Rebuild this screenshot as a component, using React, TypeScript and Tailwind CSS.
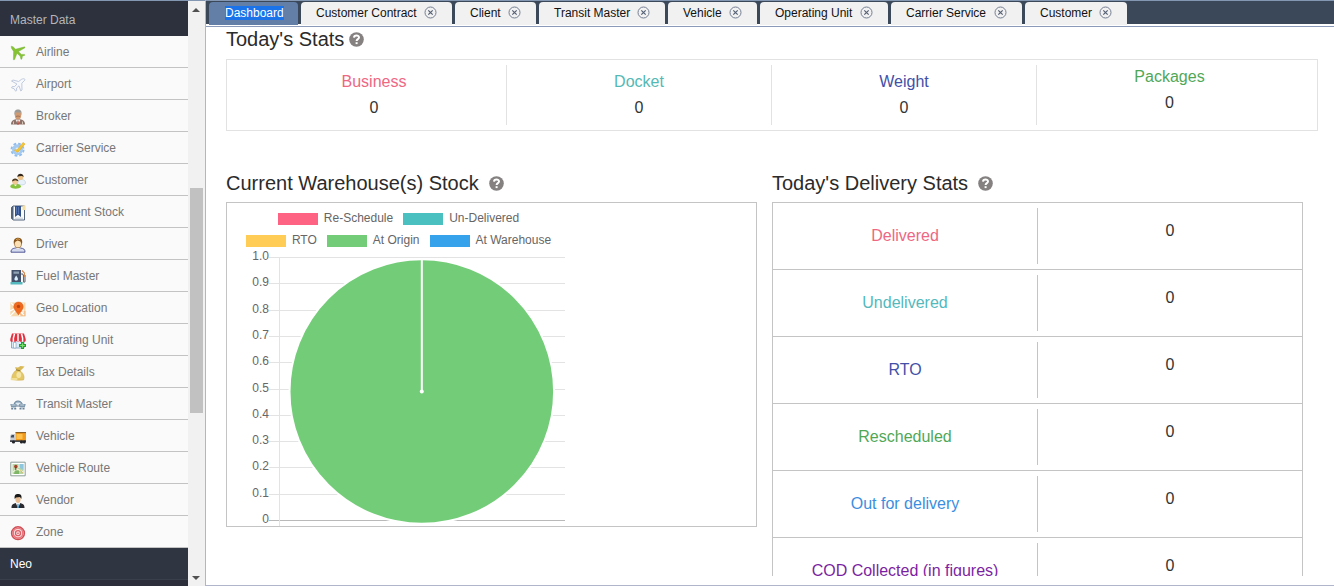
import React from "react";

type IconProps = { children: React.ReactNode };

function Glyph({ children }: IconProps) {
  return (
    <svg width="16" height="16" viewBox="0 0 16 16" fill="none" className="shrink-0">
      {children}
    </svg>
  );
}

const menu: { label: string; icon: React.ReactNode }[] = [
  {
    label: "Airline",
    icon: (
      <path
        fill="#86c332"
        stroke="#6bab2a"
        strokeWidth=".4"
        strokeLinejoin="round"
        d="M1.200 1.200 3 1.700 5.600 4.200 14.600 1.800 15 2.700 8.400 6.600 11.400 9.400 14.500 9.400 14.600 10.400 12.400 11 12 13.800 11 14.400 10.200 11.300 7 8.200 4.600 14.600 3.400 14.800 3.600 6.400 1.500 3.200Z"
      />
    ),
  },
  {
    label: "Airport",
    icon: (
      <path
        fill="#f8f9fc"
        stroke="#b9c4da"
        strokeWidth=".9"
        strokeLinejoin="round"
        d="M1.500 4 3 3 8.600 4.500 11.600 2.300C13.500 1.300 15.400 1.700 14.800 3.200L11.800 6.200 12 13 10.800 14 9 8.800 6.600 11 6.600 13.600 5.600 14.200 4.200 11.800 1.500 10.800 2.100 9.700 4.700 9.500 6.900 7Z"
      />
    ),
  },
  {
    label: "Broker",
    icon: (
      <>
        <path d="M1 15.500C1 12 3 11 6 10h4c3 1 5 2 5 5.500Z" fill="#8d726a" />
        <path d="m5.500 10.500 2.500 5 2.500-5Z" fill="#f5f2f0" />
        <path d="M7.500 11.500h1l.5 4H7Z" fill="#b84c3d" />
        <path d="M3.500 12.500v3M12.500 12.500v3" stroke="#d6c4b8" />
        <ellipse cx="8" cy="6" rx="3.200" ry="4.500" fill="#cf9a72" />
        <path d="M4.600 6.500C3.800 2 5.500.6 8 .6S12.200 2 11.400 6.500L10.600 3.600H5.400Z" fill="#9c9a96" />
        <path d="M6 7.500q2-1 4 0" stroke="#9a6a4b" strokeWidth=".8" />
      </>
    ),
  },
  {
    label: "Carrier Service",
    icon: (
      <>
        <circle cx="7.500" cy="8.700" r="6" stroke="#8fbcec" strokeWidth="2" strokeDasharray="2.700 2" />
        <circle cx="7.500" cy="8.700" r="5.500" fill="#a5caf1" />
        <circle cx="7.500" cy="9" r="2.600" fill="#dcecfb" />
        <path d="m5.600 8 1.400 1.200L13 1.400l2 1.600-7 8.200-2-.4-1.500-1.800Z" fill="#f5c62e" stroke="#dba021" strokeWidth=".5" />
      </>
    ),
  },
  {
    label: "Customer",
    icon: (
      <>
        <path d="M7.500 10.500c0-3 1.600-4 4-4s4 1 4 3.500-8 2.500-8 .5Z" fill="#e8f1f8" stroke="#b5c9d9" strokeWidth=".6" />
        <circle cx="10.500" cy="4.300" r="2.800" fill="#efc48a" />
        <path d="M7.300 4C7.500-.2 13.300-.4 13.700 4L12 3 9 3.200Z" fill="#33261a" />
        <path d="M.3 14C.5 11 2.500 11 5.500 11s5.500.4 5.500 3c-2 2.200-9 2.200-10.700 0Z" fill="#86c23c" />
        <circle cx="5.200" cy="8.700" r="3" fill="#f2c992" />
        <path d="M2 8.600C2 4.400 8 4.400 8.500 8.300L5.200 7.200Z" fill="#49371f" />
        <path d="m4 11.800 1.400 1.400L7 11.800Z" fill="#fff" />
      </>
    ),
  },
  {
    label: "Document Stock",
    icon: (
      <>
        <path d="M1.500 2.500 3 1h11.500v14h-11L1.500 13.500Z" fill="#f9fbfd" stroke="#52637c" />
        <path d="M1.500 2 3.500 1v14l-2-1.500Z" fill="#52637c" />
        <path d="M5 1h6v11L8 9.800 5 12Z" fill="#314f89" />
        <path d="M6.500 2v7M8.500 2v7" stroke="#5c7dba" strokeWidth=".8" />
        <path d="M12.500.500h3v4.500h-3Z" fill="#f3dfa4" />
        <path d="M5 13.200h8" stroke="#c3ccd5" />
      </>
    ),
  },
  {
    label: "Driver",
    icon: (
      <>
        <path d="M1 15.200C1 11.800 3 11.500 5.500 11h5c3 .5 4.500 1 4.500 4.200Z" fill="#d5dbef" stroke="#41478c" strokeWidth=".9" />
        <path d="m5.500 11 2.500 2 2.500-2" fill="#fff" stroke="#9fa6cc" strokeWidth=".4" />
        <ellipse cx="8" cy="6.500" rx="3.500" ry="4.300" fill="#fae0b4" stroke="#8e6126" strokeWidth=".7" />
        <path d="M4 7.500C2.800 1.500 6 .6 8.400.7c4 .2 4.400 4 3.400 6.800L10.500 4.600 7.500 3.600 5 5Z" fill="#86551f" />
        <path d="M6 2.600Q8 1.200 10 2.500" stroke="#d9a14f" />
      </>
    ),
  },
  {
    label: "Fuel Master",
    icon: (
      <>
        <path d="M1.500 1h9.500v13H1.500Z" fill="#43526a" />
        <path d="M3.500 2.500H9v2.300H3.500Z" fill="#8fa2b4" />
        <path d="M6.200 6.500C3.700 9.800 4 11.500 6.200 11.500s2.500-1.700 0-5Z" fill="#d9f0ff" />
        <path d="M11 5h1.500l1 1.500v6q.5 1.500 1.500 0V6" stroke="#636b76" strokeWidth="1.100" />
        <path d="M12 1.500 14.500 4V8" stroke="#d58a51" strokeWidth="1.100" />
        <path d="M.5 13h12v2.500H.5Z" fill="#54b9bf" />
      </>
    ),
  },
  {
    label: "Geo Location",
    icon: (
      <>
        <path d="M.3 1.500h15.200v13.800H.3Z" fill="#f7d9ae" />
        <path d="M10 10h5.500v5.300H9Z" fill="#f3c08e" />
        <path d="M0 10 6 7l4 8M1 2l13 12M0 15l6-6M13 2v10" stroke="#fff" strokeWidth="1.200" />
        <path d="M8.500 14C5 9 3.700 7.500 3.700 5.700a4.800 4.800 0 0 1 9.600 0C13.300 7.800 12 9 8.500 14Z" fill="#ef6a1f" stroke="#d2541a" strokeWidth=".4" />
        <circle cx="8.500" cy="5.400" r="1.700" fill="#b9420f" />
      </>
    ),
  },
  {
    label: "Operating Unit",
    icon: (
      <>
        <path d="M1.500 7h12.500v8H1.500Z" fill="#d7eaf8" stroke="#7d9bb6" strokeWidth=".8" />
        <path d="M3.500 9.500H6V15H3.500Z" fill="#fff" stroke="#7d9bb6" strokeWidth=".6" />
        <path d="M2 .5h12l1.700 5.500v2q-1.600 1.700-3.100 0-1.600 1.700-3.100 0-1.500 1.700-3.100 0-1.500 1.700-3.100 0Q1.800 9.700.3 8V6Z" fill="#e2303f" />
        <path d="M4.500.8 3.400 5v3.500M8 .8v7.700M11.500.8 12.600 5v3.500" stroke="#fff" strokeWidth="1.500" />
        <path d="M11 9h3v2h2v3h-2v2h-3v-2H9v-3h2Z" fill="#1fa12d" />
        <path d="M12.500 10.200v4.600M10.200 12.500h4.600" stroke="#7fdc70" strokeWidth="1.200" />
      </>
    ),
  },
  {
    label: "Tax Details",
    icon: (
      <>
        <path d="M6.500 5C3.500 7 1 11 2 14.500q4.500 1.200 11.500.5c1.500-3.500-.3-7-3.500-9.300Z" fill="#e5c866" stroke="#c8a64a" strokeWidth=".5" />
        <path d="M6 4.500 5 2.200l3 .3L10.500 1l4 .4-2 2.400-2.300 2Z" fill="#d8b955" />
        <path d="M6 4.800 10.300 5.800" stroke="#907530" />
        <ellipse cx="8.800" cy="10" rx="2.400" ry="3" fill="#f5e5a5" />
        <path d="M.8 13h6.500v2.200H.8Z" fill="#f1df95" />
      </>
    ),
  },
  {
    label: "Transit Master",
    icon: (
      <>
        <path d="M4 7.500Q5 4 8 4t4.500 3.500" fill="#a9bccd" stroke="#6c869e" strokeWidth="1.100" />
        <path d="M6 6h4v2H6Z" fill="#dde7ef" />
        <path d="M.3 7h6.400l-.7 3.500H1.200ZM9 7h6.700l-.9 3.500h-5Z" fill="#7f98ae" />
        <path d="M1.500 8h4M10.200 8h4" stroke="#c5d3de" />
        <path d="M6 9h4" stroke="#5d768d" />
        <path d="M1.200 11h2v1.500h-2ZM4.200 11h2v1.500h-2ZM9.500 11h2v1.500h-2ZM12.500 11h2v1.500h-2Z" fill="#6a8298" />
      </>
    ),
  },
  {
    label: "Vehicle",
    icon: (
      <>
        <path d="M5.500 3.300H16V12H5.500Z" fill="#f19a1c" />
        <path d="M6.500 5h6v5h-6Z" fill="#ffc14d" />
        <path d="M5.500 3.600H16" stroke="#5d3c10" strokeWidth=".8" />
        <path d="M.3 6.500 1.500 5h4v7H.3Z" fill="#c6cad0" />
        <path d="M.8 7.500 1.800 6H4v2.500H.8Z" fill="#3f4d5f" />
        <path d="M0 11.300h16v1.600H0Z" fill="#30343c" />
        <circle cx="3.500" cy="13" r="1.600" fill="#222429" />
        <circle cx="11.500" cy="13" r="1.600" fill="#222429" />
        <circle cx="14.300" cy="13" r="1.500" fill="#222429" />
      </>
    ),
  },
  {
    label: "Vehicle Route",
    icon: (
      <>
        <path d="M.8 1.200h14.400v13.600H.8Z" fill="#fff" stroke="#8c9f96" />
        <path d="M2.500 3h11v10h-11Z" fill="#b9d6a4" />
        <path d="M8 3h5.500v6L10 7Z" fill="#8fc6df" />
        <path d="m3 11 4-3 6 3M9 3v4" stroke="#eff5d7" strokeWidth="1.200" />
        <path d="M5 9.500h4V13H4Z" fill="#7fb566" />
        <circle cx="5.800" cy="5.500" r="1.700" fill="#a5442d" />
        <path d="M5.800 6v3" stroke="#7a3424" />
        <path d="m10.500 9.500 2 2.500" stroke="#ddb04b" />
      </>
    ),
  },
  {
    label: "Vendor",
    icon: (
      <>
        <path d="M1.500 15C1.500 11 3 11 6 10h4c3 1 4.500 1 4.500 5Z" fill="#2a2b30" />
        <path d="m5.700 10 2.300 5 2.300-5Z" fill="#eef5fb" />
        <path d="M7.500 11h1l.4 4H7Z" fill="#489bc7" />
        <ellipse cx="8" cy="6" rx="2.600" ry="4" fill="#e9bd93" />
        <path d="M4.700 6C4.200 2 5.500 1 8 1s4.200 1 3.300 5L10 4 6 4.400Z" fill="#19191a" />
      </>
    ),
  },
  {
    label: "Zone",
    icon: (
      <>
        <circle cx="8" cy="8.200" r="6.400" fill="#f9dfe0" stroke="#cf4f57" strokeWidth="1.500" />
        <circle cx="8" cy="8.200" r="4.900" stroke="#e8767c" strokeWidth="1.600" />
        <circle cx="8" cy="8.200" r="2.500" stroke="#dd6067" strokeWidth="1.300" />
        <circle cx="8" cy="8.200" r=".8" fill="#d2505a" />
      </>
    ),
  },
];

const tabs = [
  { label: "Customer Contract", width: "w-[151px]" },
  { label: "Client", width: "w-[81px]" },
  { label: "Transit Master", width: "w-[126px]" },
  { label: "Vehicle", width: "w-[89px]" },
  { label: "Operating Unit", width: "w-[128px]" },
  { label: "Carrier Service", width: "w-[131px]" },
  { label: "Customer", width: "w-[102px]" },
];

const stats = [
  { label: "Business", color: "text-[#ee6783]", pad: "pt-[4px]" },
  { label: "Docket", color: "text-[#54b9b5]", pad: "pt-[4px]" },
  { label: "Weight", color: "text-[#4350a8]", pad: "pt-[4px]" },
  { label: "Packages", color: "text-[#50a857]", pad: "-mt-px" },
];

const delivery = [
  { label: "Delivered", color: "text-[#ee6783]" },
  { label: "Undelivered", color: "text-[#54b9bd]" },
  { label: "RTO", color: "text-[#4350a8]" },
  { label: "Rescheduled", color: "text-[#50a857]" },
  { label: "Out for delivery", color: "text-[#3b8ee0]" },
  { label: "COD Collected (in figures)", color: "text-[#7b1fa2]" },
];

const legend = [
  [
    { label: "Re-Schedule", color: "bg-[#ff6384]" },
    { label: "Un-Delivered", color: "bg-[#4bc0c0]" },
  ],
  [
    { label: "RTO", color: "bg-[#ffcd56]" },
    { label: "At Origin", color: "bg-[#73cd78]" },
    { label: "At Warehouse", color: "bg-[#36a2eb]" },
  ],
];

const ticks = ["1.0", "0.9", "0.8", "0.7", "0.6", "0.5", "0.4", "0.3", "0.2", "0.1", "0"];
const tickY = [0, 26, 53, 79, 105, 132, 158, 184, 210, 237, 263];

function Help() {
  return (
    <svg width="15" height="15" viewBox="0 0 15 15" className="mt-px shrink-0">
      <circle cx="7.500" cy="7.500" r="7.300" fill="#858181" />
      <path d="M5 5.600C5.100 2.700 10.100 2.800 10 5.500 9.900 7.200 7.700 7.100 7.600 9" fill="none" stroke="#fff" strokeWidth="2" />
      <path d="M6.600 10.200h2v1.900h-2Z" fill="#fff" />
    </svg>
  );
}

function Close() {
  return (
    <svg width="13" height="13" viewBox="0 0 13 13" fill="none" className="shrink-0">
      <circle cx="6.500" cy="6.500" r="5.500" stroke="#747e92" />
      <path d="m4.300 4.300 4.400 4.400m0-4.400L4.300 8.700" stroke="#566176" strokeWidth="1.200" />
    </svg>
  );
}

function Sidebar() {
  return (
    <nav className="flex w-[188px] shrink-0 flex-col overflow-hidden text-xs">
      <div className="flex h-9 shrink-0 items-center border-t border-[#8397b3] bg-[#2c313d] pt-[3px] pl-[10px] text-[#b4b5b8]">
        Master Data
      </div>
      {menu.map((m) => (
        <div
          key={m.label}
          className="flex h-8 shrink-0 items-center gap-[10px] border-b border-[#c3c3c3] bg-[#fafafa] pl-[10px] text-[#777]"
        >
          <span className="mt-[3px]">
            <Glyph>{m.icon}</Glyph>
          </span>
          <span>{m.label}</span>
        </div>
      ))}
      <div className="flex h-8 shrink-0 items-center border-b border-[#3a404b] bg-[#2f3541] pl-[10px] text-white">Neo</div>
      <div className="grow bg-[#2c2f3b]" />
    </nav>
  );
}

function Scrollbar() {
  return (
    <div className="flex w-[17px] shrink-0 flex-col items-center justify-between border-t border-[#8397b3] bg-[#f1f1f1] pr-px">
      <svg width="8" height="4" viewBox="0 0 8 4" className="mt-[7px]">
        <path d="M4 0 8 4H0Z" fill="#505050" />
      </svg>
      <div className="flex grow flex-col pt-[176px]">
        <div className="h-[225px] w-[13px] bg-[#c1c1c1]" />
      </div>
      <svg width="8" height="4" viewBox="0 0 8 4" className="mb-[6px]">
        <path d="M0 0h8L4 4Z" fill="#505050" />
      </svg>
    </div>
  );
}

function PieChart() {
  return (
    <svg width="529" height="277" viewBox="0 0 529 277" className="block" fontSize="12">
      {ticks.map((t, i) => (
        <g key={t}>
          <text x="42" y={tickY[i] + 11} textAnchor="end" fill="#666">
            {t}
          </text>
          <path d={`M42 ${tickY[i] + 8.5}H338`} stroke={t === "0" ? "#b9b9b9" : "#e3e3e3"} />
        </g>
      ))}
      <path d="M52.500 8v269" stroke="#e3e3e3" />
      <circle cx="194.800" cy="142.500" r="132.300" fill="#73cd78" stroke="#fff" strokeWidth="2" />
      <path d="M194.800 10v132.500" stroke="#fff" strokeWidth="2" />
      <circle cx="194.800" cy="142.500" r="2" fill="#fff" />
    </svg>
  );
}

export default function App() {
  return (
    <div className="flex h-[586px] w-[1334px] overflow-hidden bg-white font-['Liberation_Sans',Arial,sans-serif]">
      <Sidebar />
      <Scrollbar />
      <main className="flex min-w-0 grow flex-col border-b border-l border-[#b0b5cb]">
        <div className="flex h-[27px] shrink-0 flex-col border-b border-[#8a9ab8]">
          <div className="flex h-[24px] gap-[3px] border-t border-[#8397b3] bg-[#3b485a] pt-px pl-[3px] text-xs text-[#111]">
            <div className="flex h-[23px] w-[89px] items-center rounded-t bg-[#637fa8] pb-[2px] pl-4 text-white">
              <span className="bg-[#1a73e8] leading-[14px]">Dashboard</span>
            </div>
            {tabs.map((t) => (
              <div
                key={t.label}
                className={`flex h-[23px] items-center justify-between rounded-t bg-[#f1f1f1] pr-[15px] pb-[2px] pl-[15px] ${t.width}`}
              >
                <span className="whitespace-nowrap">{t.label}</span>
                <Close />
              </div>
            ))}
          </div>
        </div>

        <div className="flex h-[549px] shrink-0 flex-col overflow-hidden pl-5">
          <h2 className="flex h-8 shrink-0 items-center gap-[5px] pb-[8px] text-xl text-[#2b2b2b]">
            Today's Stats
            <Help />
          </h2>
          <section className="flex h-[72px] w-[1092px] shrink-0 border border-[#e2e2e2] px-[15px] py-[5px] text-center">
            {stats.map((s) => (
              <div
                key={s.label}
                className={`flex w-[265px] shrink-0 flex-col border-r border-[#e2e2e2] leading-[26px] last:border-r-0 ${s.pad}`}
              >
                <span className={s.color}>{s.label}</span>
                <span className="text-[#333]">0</span>
              </div>
            ))}
          </section>

          <div className="mt-[37px] flex shrink-0 gap-[15px]">
            <section className="w-[531px] shrink-0">
              <h2 className="flex h-[34px] items-center gap-[10px] pb-[4px] text-xl text-[#2b2b2b]">
                Current Warehouse(s) Stock
                <Help />
              </h2>
              <div className="h-[325px] overflow-hidden border border-[#c4c4c4]">
                <div className="flex w-[343px] flex-col gap-[8px] pt-[8px] text-xs leading-[14px] text-[#666]">
                  {legend.map((row, i) => (
                    <div key={i} className="flex justify-center gap-[10px]">
                      {row.map((l) => (
                        <div key={l.label} className="flex items-start gap-[6px]">
                          <span className={`mt-[2px] h-3 w-10 ${l.color}`} />
                          <span>{l.label}</span>
                        </div>
                      ))}
                    </div>
                  ))}
                </div>
                <div className="mt-[2px]">
                  <PieChart />
                </div>
              </div>
            </section>
            <section className="w-[531px] shrink-0">
              <h2 className="flex h-[34px] items-center gap-[10px] pb-[4px] text-xl text-[#2b2b2b]">
                Today's Delivery Stats
                <Help />
              </h2>
              <div className="border-x border-t border-[#c4c4c4]">
                {delivery.map((d) => (
                  <div key={d.label} className="flex h-[67px] border-b border-[#c4c4c4] pt-[5px] pb-[5px] text-center">
                    <div className={`w-[265px] border-r border-[#c4c4c4] pt-[16px] leading-6 ${d.color}`}>{d.label}</div>
                    <div className="w-[264px] pt-[11px] leading-6 text-[#333]">0</div>
                  </div>
                ))}
              </div>
            </section>
          </div>
        </div>
      </main>
    </div>
  );
}
